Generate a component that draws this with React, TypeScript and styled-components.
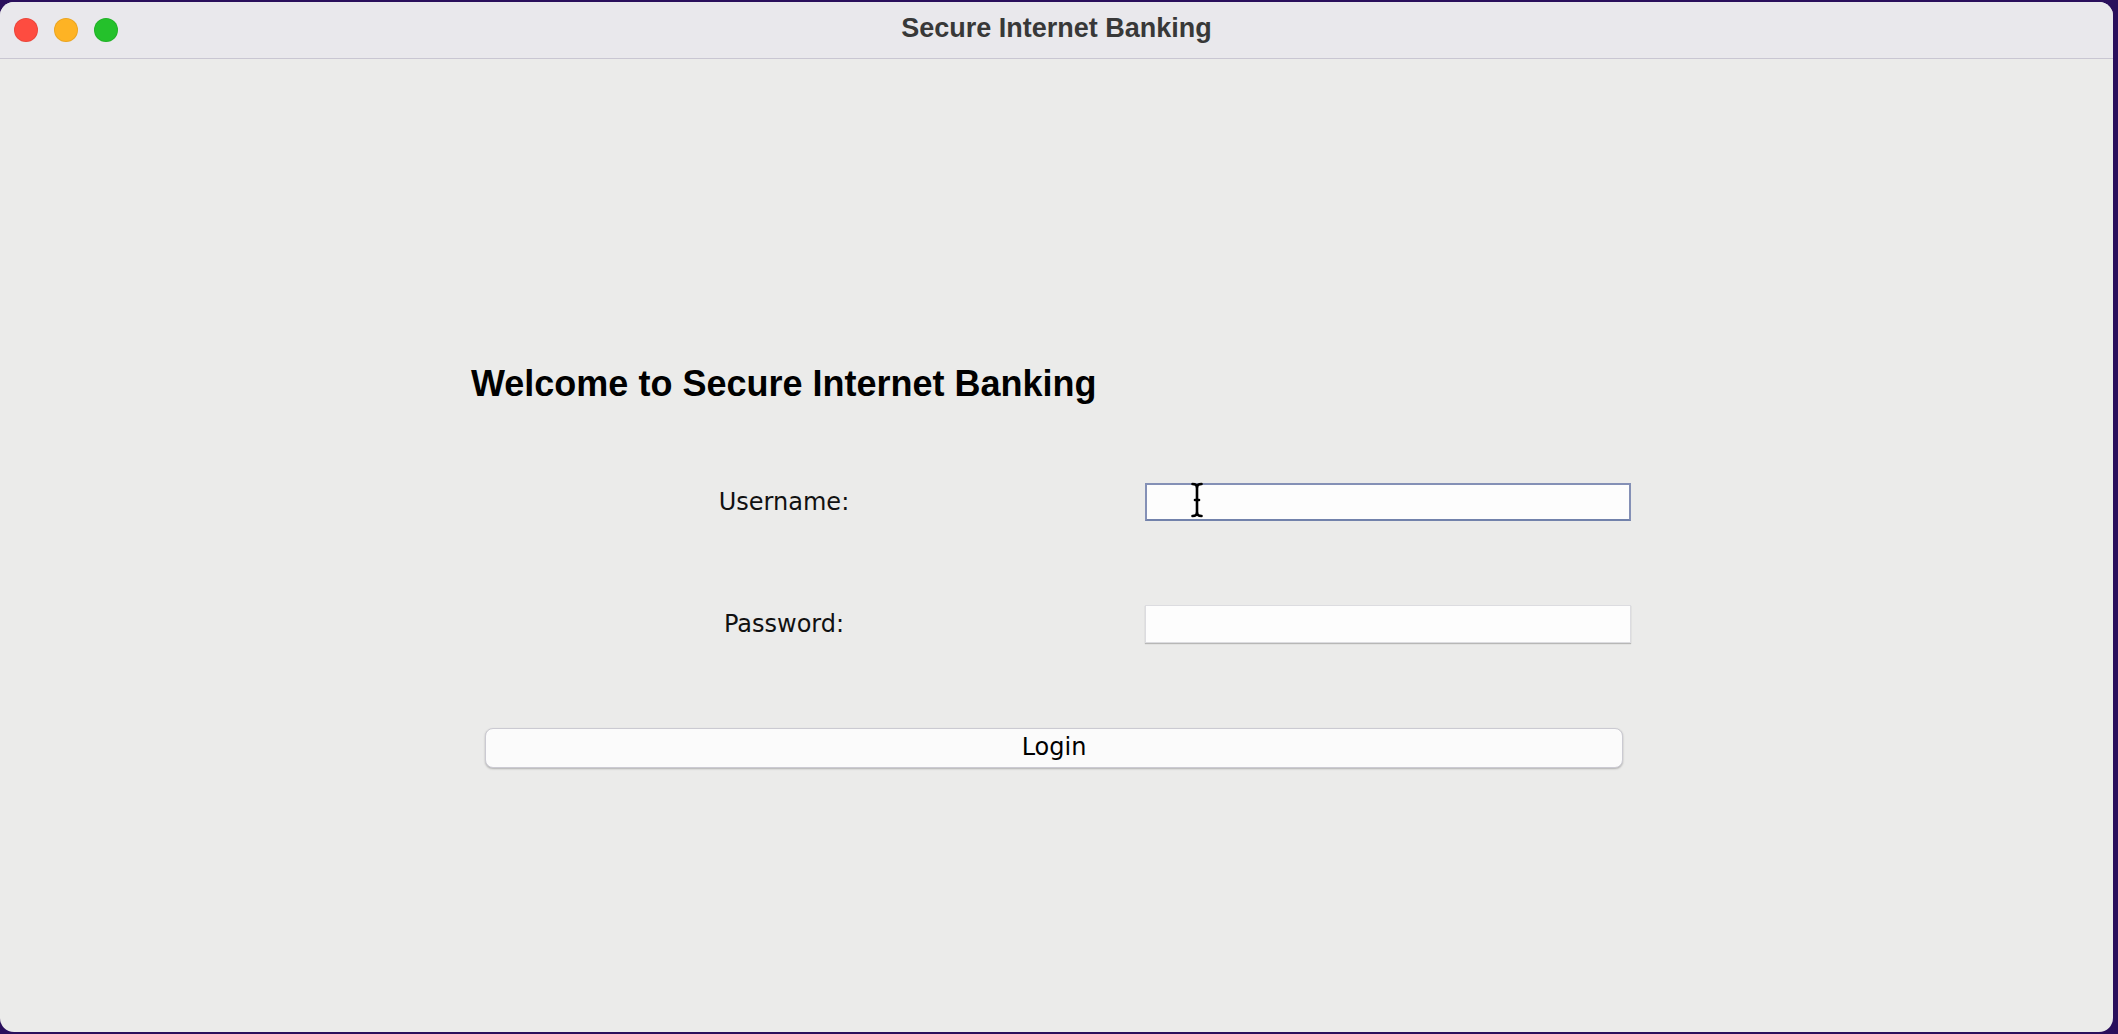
import React from "react";
import styled, { createGlobalStyle } from "styled-components";

const GlobalStyle = createGlobalStyle`
  html, body {
    margin: 0;
    padding: 0;
    background: #2a0f5c;
    overflow: hidden;
  }
`;

const Desktop = styled.div`
  width: 2118px;
  height: 1034px;
  box-sizing: border-box;
  padding: 2px 5px 2px 0;
  display: flex;
`;

const Window = styled.div`
  flex: 1;
  display: flex;
  flex-direction: column;
  border-radius: 14px;
  overflow: hidden;
  background: #ebebea;
`;

const TitleBar = styled.header`
  height: 56px;
  flex-shrink: 0;
  display: grid;
  grid-template-columns: 1fr auto 1fr;
  align-items: center;
  background: #e9e8ec;
  border-bottom: 1px solid #c9c6d2;
`;

const Lights = styled.div`
  display: flex;
  gap: 16px;
  padding-left: 14px;
`;

const Light = styled.span<{ $color: string }>`
  width: 24px;
  height: 24px;
  border-radius: 50%;
  background: ${(p) => p.$color};
  box-shadow: inset 0 0 0 1px rgba(0, 0, 0, 0.08);
`;

const WindowTitle = styled.div`
  font-family: "Liberation Sans", Arial, sans-serif;
  font-weight: 700;
  font-size: 27px;
  color: #383838;
  padding-bottom: 4px;
`;

const Content = styled.main`
  flex: 1;
  padding: 307px 0 0 471px;
  display: flex;
  flex-direction: column;
  align-items: flex-start;
`;

const Heading = styled.h1`
  margin: 0;
  font-family: "Liberation Sans", Arial, sans-serif;
  font-weight: 700;
  font-size: 36px;
  line-height: 36px;
  color: #000;
`;

const FormGrid = styled.div`
  margin-top: 81px;
  display: grid;
  grid-template-columns: 626px 486px;
  grid-auto-rows: 38px;
  column-gap: 48px;
  row-gap: 84px;
  align-items: center;
`;

const Label = styled.label`
  justify-self: center;
  font-family: "DejaVu Sans", Verdana, sans-serif;
  font-size: 24px;
  line-height: 28px;
  color: #111;
`;

const FieldWrap = styled.div`
  position: relative;
  height: 38px;
`;

const Field = styled.input<{ $focused?: boolean }>`
  width: 100%;
  height: 100%;
  box-sizing: border-box;
  margin: 0;
  outline: none;
  background: #fdfdfd;
  font-family: "DejaVu Sans", Verdana, sans-serif;
  font-size: 20px;
  padding: 0 8px;
  border: ${(p) => (p.$focused ? "2px solid #8490b6" : "1px solid #dcdce0")};
  border-bottom-color: ${(p) => (p.$focused ? "#7282ab" : "#dcdce0")};
  box-shadow: ${(p) =>
    p.$focused ? "none" : "0 1px 1px rgba(0, 0, 0, 0.22)"};
`;

const Cursor = styled.svg`
  position: absolute;
  left: 45px;
  top: -1px;
  pointer-events: none;
`;

const LoginButton = styled.button`
  margin: 85px 0 0 14px;
  width: 1138px;
  height: 40px;
  box-sizing: border-box;
  background: #fbfbfb;
  border: 1px solid #cbcad2;
  border-radius: 8px;
  box-shadow: 0 1px 2px rgba(0, 0, 0, 0.25);
  font-family: "DejaVu Sans", Verdana, sans-serif;
  font-size: 24px;
  color: #000;
  padding: 0 0 2px;
`;

function IBeam() {
  return (
    <Cursor width="14" height="36" viewBox="0 0 14 36">
      <g fill="none" stroke="#000" strokeWidth="2.6" strokeLinecap="round">
        <path d="M2.5 2 Q7 2 7 5.5 Q7 2 11.5 2" />
        <path d="M7 5 V31" />
        <path d="M2.5 34 Q7 34 7 30.5 Q7 34 11.5 34" />
        <path d="M5 18 H9" />
      </g>
    </Cursor>
  );
}

export default function App() {
  return (
    <>
      <GlobalStyle />
      <Desktop>
        <Window>
          <TitleBar>
            <Lights>
              <Light $color="#fe4c40" />
              <Light $color="#feb324" />
              <Light $color="#24c12b" />
            </Lights>
            <WindowTitle>Secure Internet Banking</WindowTitle>
            <div />
          </TitleBar>
          <Content>
            <Heading>Welcome to Secure Internet Banking</Heading>
            <FormGrid>
              <Label htmlFor="username">Username:</Label>
              <FieldWrap>
                <Field id="username" $focused />
                <IBeam />
              </FieldWrap>
              <Label htmlFor="password">Password:</Label>
              <FieldWrap>
                <Field id="password" type="password" />
              </FieldWrap>
            </FormGrid>
            <LoginButton>Login</LoginButton>
          </Content>
        </Window>
      </Desktop>
    </>
  );
}
